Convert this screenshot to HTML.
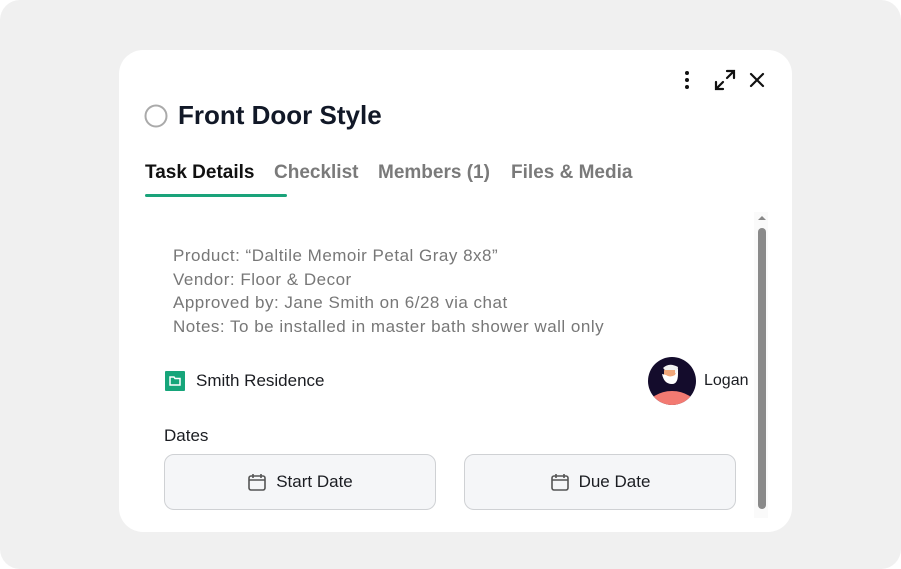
<!DOCTYPE html>
<html><head><style>
*{margin:0;padding:0;box-sizing:border-box}
html,body{width:901px;height:569px;background:#fff;overflow:hidden}
body{font-family:"Liberation Sans",sans-serif;position:relative}
.outer{position:absolute;left:0;top:0;width:901px;height:569px;background:#f0f0f0;border-radius:20px}
.card{position:absolute;left:119px;top:50px;width:673px;height:482px;background:#fff;border-radius:24px}
.a{position:absolute;white-space:nowrap}
.tab{position:absolute;top:162px;font-size:19px;font-weight:bold;color:#7a7a7a}
.btn{position:absolute;top:454px;width:272px;height:56px;background:#f5f6f8;border:1px solid #cfd1d4;border-radius:10px;font-size:17px;color:#1b1d22;display:flex;align-items:center;justify-content:center;gap:9px}
</style></head><body>
<div class="outer"></div>
<div class="card"></div>
<svg class="a" style="left:680px;top:70px" width="14" height="20"><circle cx="7" cy="3" r="2" fill="#111"/><circle cx="7" cy="10" r="2" fill="#111"/><circle cx="7" cy="17" r="2" fill="#111"/></svg>
<svg class="a" style="left:714px;top:69px" width="22" height="22" fill="none" stroke="#111" stroke-width="2.2" stroke-linecap="round"><path d="M13 2h7v7M20 2l-7 7M2 13v7h7M2 20l7-7"/></svg>
<svg class="a" style="left:749px;top:72px" width="16" height="16" stroke="#111" stroke-width="2.2" stroke-linecap="round"><path d="M2 2l12 12M14 2L2 14"/></svg>
<svg class="a" style="left:144px;top:104px" width="24" height="24"><circle cx="12" cy="12" r="10.5" fill="none" stroke="#aaa" stroke-width="2"/></svg>
<div class="a" style="left:178px;top:100px;font-size:26px;font-weight:bold;color:#111827">Front Door Style</div>
<div class="tab" style="left:145px;color:#111">Task Details</div>
<div class="tab" style="left:274px">Checklist</div>
<div class="tab" style="left:378px">Members (1)</div>
<div class="tab" style="left:511px">Files &amp; Media</div>
<div class="a" style="left:145px;top:194px;width:142px;height:3px;background:#1aa37a;border-radius:2px"></div>
<div class="a" style="left:173px;top:244px;font-size:17px;line-height:23.7px;color:#777;letter-spacing:0.5px">Product: “Daltile Memoir Petal Gray 8x8”<br>Vendor: Floor &amp; Decor<br>Approved by: Jane Smith on 6/28 via chat<br>Notes: To be installed in master bath shower wall only</div>
<svg class="a" style="left:165px;top:371px" width="20" height="20"><rect width="20" height="20" fill="#16a57a" rx="1"/><path d="M5 6h4l1 1.5h5v6.5H5z" fill="none" stroke="#fff" stroke-width="1.5"/></svg>
<div class="a" style="left:196px;top:371px;font-size:17px;color:#1b1d22">Smith Residence</div>
<svg class="a" style="left:648px;top:357px" width="48" height="48"><defs><clipPath id="c"><circle cx="24" cy="24" r="24"/></clipPath></defs><g clip-path="url(#c)"><rect width="48" height="48" fill="#140c2c"/><ellipse cx="24" cy="50" rx="24" ry="16" fill="#f37a72"/><rect x="16" y="9" width="12" height="17" rx="5" fill="#f0a77a"/><path d="M14 17q2 10 10 10q6 0 6-10v-6l-3 7q-5 3-9 0z" fill="#fff"/><path d="M15 11q6-6 15-1l-1 6h-2v-3h-10z" fill="#f2f2f2"/></g></svg>
<div class="a" style="left:704px;top:372px;font-size:16px;color:#1b1d22">Logan</div>
<div class="a" style="left:164px;top:426px;font-size:17px;color:#1b1d22">Dates</div>
<div class="btn" style="left:164px"><svg width="20" height="20" fill="none" stroke="#555" stroke-width="1.6"><rect x="2" y="4" width="16" height="14" rx="2"/><path d="M2 8h16M6 2v4M14 2v4"/></svg>Start Date</div>
<div class="btn" style="left:464px"><svg width="20" height="20" fill="none" stroke="#555" stroke-width="1.6"><rect x="2" y="4" width="16" height="14" rx="2"/><path d="M2 8h16M6 2v4M14 2v4"/></svg>Due Date</div>
<div class="a" style="left:754px;top:212px;width:14px;height:306px;background:#fafafa"></div>
<svg class="a" style="left:757px;top:215px" width="10" height="6"><path d="M1 5L5 1L9 5z" fill="#888"/></svg>
<div class="a" style="left:758px;top:228px;width:8px;height:281px;background:#8a8a8a;border-radius:4px"></div>
</body></html>
